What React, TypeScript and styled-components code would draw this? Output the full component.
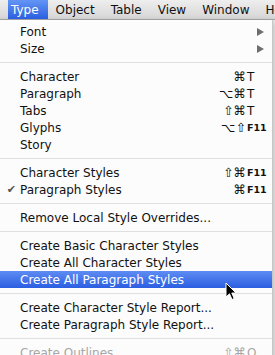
import React from "react";
import styled, { createGlobalStyle } from "styled-components";

const GlobalStyle = createGlobalStyle`
  html, body {
    margin: 0;
    padding: 0;
    background: #e4e4e4;
  }
  body {
    font-family: "DejaVu Sans", "Liberation Sans", sans-serif;
  }
`;

type MenuEntry =
  | { kind: "sep" }
  | {
      kind: "item";
      label: string;
      mods?: string;
      key?: string;
      fkey?: boolean;
      submenu?: boolean;
      checked?: boolean;
      active?: boolean;
      disabled?: boolean;
    };

const entries: MenuEntry[] = [
  { kind: "item", label: "Font", submenu: true },
  { kind: "item", label: "Size", submenu: true },
  { kind: "sep" },
  { kind: "item", label: "Character", mods: "⌘", key: "T" },
  { kind: "item", label: "Paragraph", mods: "⌥⌘", key: "T" },
  { kind: "item", label: "Tabs", mods: "⇧⌘", key: "T" },
  { kind: "item", label: "Glyphs", mods: "⌥⇧", key: "F11", fkey: true },
  { kind: "item", label: "Story" },
  { kind: "sep" },
  { kind: "item", label: "Character Styles", mods: "⇧⌘", key: "F11", fkey: true },
  { kind: "item", label: "Paragraph Styles", mods: "⌘", key: "F11", fkey: true, checked: true },
  { kind: "sep" },
  { kind: "item", label: "Remove Local Style Overrides..." },
  { kind: "sep" },
  { kind: "item", label: "Create Basic Character Styles" },
  { kind: "item", label: "Create All Character Styles" },
  { kind: "item", label: "Create All Paragraph Styles", active: true },
  { kind: "sep" },
  { kind: "item", label: "Create Character Style Report..." },
  { kind: "item", label: "Create Paragraph Style Report..." },
  { kind: "sep" },
  { kind: "item", label: "Create Outlines", mods: "⇧⌘", key: "O", disabled: true },
];

const titles = ["Type", "Object", "Table", "View", "Window", "Help"];

export default function App() {
  return (
    <Screen>
      <GlobalStyle />
      <MenuBar>
        {titles.map((t, i) => (
          <MenuTitle key={t} $active={i === 0}>
            {t}
          </MenuTitle>
        ))}
      </MenuBar>
      <Dropdown>
        {entries.map((e, i) =>
          e.kind === "sep" ? (
            <Separator key={i} />
          ) : (
            <Item key={i} $active={e.active} $disabled={e.disabled}>
              <Check>{e.checked ? "✔" : ""}</Check>
              <Label>{e.label}</Label>
              <Mods>{e.mods}</Mods>
              <KeyCell $fkey={e.fkey}>
                {e.submenu ? <Arrow /> : e.key}
              </KeyCell>
            </Item>
          )
        )}
      </Dropdown>
      <Cursor width="12" height="19" viewBox="0 0 12 19">
        <path
          d="M1 1 L1 15 L4.5 11.8 L7 17.5 L9.2 16.5 L6.8 11 L11 11 Z"
          fill="#000"
          stroke="#fff"
          strokeWidth="1"
          strokeLinejoin="round"
        />
      </Cursor>
    </Screen>
  );
}

const Screen = styled.div`
  position: relative;
  width: 275px;
  height: 355px;
  overflow: hidden;
  background: #e8e8e8;
`;

const MenuBar = styled.div`
  display: flex;
  align-items: stretch;
  height: 20px;
  padding-left: 8px;
  background: linear-gradient(#eeeeee, #d6d6d6);
  border-bottom: 1px solid #a8a8a8;
  box-sizing: border-box;
  white-space: nowrap;
`;

const MenuTitle = styled.div<{ $active?: boolean }>`
  display: flex;
  align-items: center;
  padding: ${({ $active }) => ($active ? "0 9px 0 3px" : "0 8px")};
  font-size: 12px;
  color: ${({ $active }) => ($active ? "#fff" : "#111")};
  background: ${({ $active }) =>
    $active ? "linear-gradient(#6495f5, #2c5fe0)" : "transparent"};
`;

const Dropdown = styled.div`
  width: 272px;
  padding-top: 3px;
  background: rgba(252, 252, 252, 0.97);
  border-right: 1px solid #c8c8c8;
  box-shadow: 0 2px 6px rgba(0, 0, 0, 0.25);
`;

const Item = styled.div<{ $active?: boolean; $disabled?: boolean }>`
  display: grid;
  grid-template-columns: 20px 1fr auto 26px;
  align-items: center;
  height: 17px;
  font-size: 12px;
  color: ${({ $active, $disabled }) =>
    $active ? "#fff" : $disabled ? "#a6a6a6" : "#111"};
  background: ${({ $active }) =>
    $active ? "linear-gradient(#5e8cf3, #2b5ee2)" : "transparent"};
  white-space: nowrap;
`;

const Check = styled.span`
  font-size: 11px;
  color: #555;
  text-align: right;
  padding-right: 4px;
`;

const Label = styled.span``;

const Mods = styled.span`
  font-size: 12.5px;
  text-align: right;
`;

const KeyCell = styled.span<{ $fkey?: boolean }>`
  font-size: ${({ $fkey }) => ($fkey ? "9.5px" : "12px")};
  font-weight: ${({ $fkey }) => ($fkey ? "bold" : "normal")};
  padding-left: 1px;
  display: flex;
  align-items: center;
`;

const Arrow = styled.span`
  margin-left: 10px;
  width: 0;
  height: 0;
  border-top: 4px solid transparent;
  border-bottom: 4px solid transparent;
  border-left: 7px solid #6e6e6e;
`;

const Separator = styled.div`
  height: 11px;
  display: flex;
  align-items: center;

  &::after {
    content: "";
    flex: 1;
    height: 1px;
    background: #e0e0e0;
  }
`;

const Cursor = styled.svg`
  position: absolute;
  left: 225px;
  top: 282px;
`;
